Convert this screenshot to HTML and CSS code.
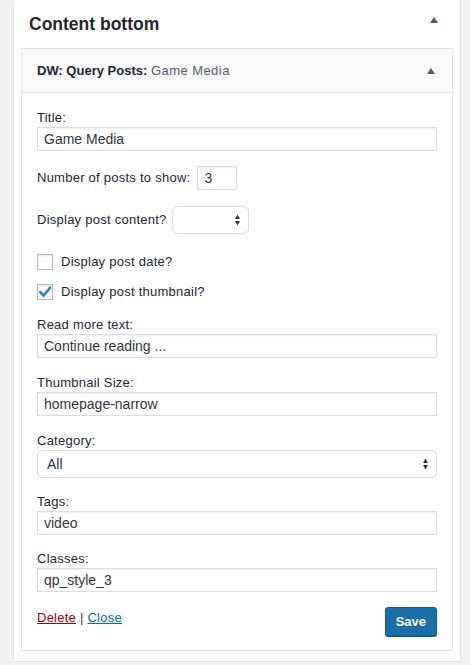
FILE: index.html
```html
<!DOCTYPE html>
<html lang="en">
<head>
<meta charset="utf-8">
<title>Content bottom</title>
<link rel="stylesheet" href="styles.css">
</head>
<body>
<div class="sidebar">
  <div class="sidebar-name">
    <h2>Content bottom</h2>
    <svg class="toggle toggle-outer" width="8" height="6" viewBox="0 0 8 6"><polygon points="0,6 4,0 8,6"/></svg>
  </div>
  <div class="widget">
    <div class="widget-top">
      <h3>DW: Query Posts: <span class="in-title">Game Media</span></h3>
      <svg class="toggle" width="8" height="6" viewBox="0 0 8 6"><polygon points="0,6 4,0 8,6"/></svg>
    </div>
    <form class="widget-inside">
      <div class="field f-title">
        <label class="lbl">Title:</label>
        <input class="text" type="text" value="Game Media">
      </div>
      <div class="row f-number">
        <label class="lbl-inline">Number of posts to show:</label>
        <input class="text num" type="text" value="3">
      </div>
      <div class="row f-content">
        <label class="lbl-inline">Display post content?</label>
        <div class="select small">
          <span class="select-value"></span>
          <svg class="arrows" width="5" height="12" viewBox="0 0 5 12"><polygon points="0,5 2.5,0.5 5,5"/><polygon points="0,7 5,7 2.5,11.5"/></svg>
        </div>
      </div>
      <div class="check f-date">
        <span class="box"></span>
        <span class="check-label">Display post date?</span>
      </div>
      <div class="check f-thumb">
        <span class="box"><svg width="14" height="14" viewBox="0 0 14 14"><path d="M2.3 7.2 L5.6 10.6 L12 2.8" fill="none" stroke="#1e8cbe" stroke-width="2.4" stroke-linecap="square"/></svg></span>
        <span class="check-label">Display post thumbnail?</span>
      </div>
      <div class="field f-more">
        <label class="lbl">Read more text:</label>
        <input class="text" type="text" value="Continue reading ...">
      </div>
      <div class="field f-size">
        <label class="lbl">Thumbnail Size:</label>
        <input class="text" type="text" value="homepage-narrow">
      </div>
      <div class="field f-cat">
        <label class="lbl">Category:</label>
        <div class="select wide">
          <span class="select-value">All</span>
          <svg class="arrows" width="5" height="12" viewBox="0 0 5 12"><polygon points="0,5 2.5,0.5 5,5"/><polygon points="0,7 5,7 2.5,11.5"/></svg>
        </div>
      </div>
      <div class="field f-tags">
        <label class="lbl">Tags:</label>
        <input class="text" type="text" value="video">
      </div>
      <div class="field f-classes">
        <label class="lbl">Classes:</label>
        <input class="text" type="text" value="qp_style_3">
      </div>
      <div class="footer">
        <div class="links"><a class="delete" href="#">Delete</a> <span class="sep">|</span> <a class="close" href="#">Close</a></div>
        <button class="save" type="button">Save</button>
      </div>
    </form>
  </div>
</div>
</body>
</html>
```
FILE: styles.css
```css
* { box-sizing: border-box; }

body {
  margin: 0;
  background: #f1f1f1;
  font-family: "Liberation Sans", Arial, Helvetica, sans-serif;
  font-size: 13px;
  letter-spacing: 0.25px;
  color: #23282d;
}

.sidebar {
  margin-left: 13px;
  width: 448px;
  background: #fff;
  border: 1px solid #e2e4e7;
  border-top: none;
  box-shadow: 0 1px 1px rgba(0,0,0,0.04);
  padding: 0 7px 10px;
}

.sidebar-name {
  height: 48px;
  display: flex;
  justify-content: space-between;
  align-items: flex-start;
  padding: 12px 15px 0 8px;
}

.sidebar-name h2 {
  margin: 0;
  font-size: 17.5px;
  line-height: 24px;
  font-weight: 700;
  letter-spacing: 0;
  color: #23282d;
}

.toggle polygon { fill: #555d66; }
.toggle-outer { margin-top: 5px; }

.widget {
  border: 1px solid #e5e5e5;
  background: #fff;
}

.widget-top {
  height: 44px;
  background: #f9f9f9;
  border-bottom: 1px solid #e5e5e5;
  display: flex;
  align-items: center;
  justify-content: space-between;
  padding: 0 17px 0 15px;
}

.widget-top h3 {
  margin: 0;
  font-size: 13px;
  line-height: 18px;
  font-weight: 700;
  letter-spacing: 0;
  color: #23282d;
}

.in-title {
  font-weight: 400;
  letter-spacing: 0.45px;
  color: #555d66;
}

.widget-inside {
  margin: 0;
  padding: 16px 15px 14px;
  display: flex;
  flex-direction: column;
}

.lbl {
  display: block;
  line-height: 18px;
}

.lbl-inline { line-height: 18px; }

.text {
  display: block;
  width: 100%;
  height: 24px;
  margin: 0;
  padding: 0 6px;
  border: 1px solid #ddd;
  border-radius: 0;
  box-shadow: inset 0 1px 2px rgba(0,0,0,0.07);
  background: #fff;
  font-family: inherit;
  font-size: 14px;
  letter-spacing: 0;
  color: #32373c;
  outline: none;
}

.row {
  display: flex;
  align-items: center;
}

.f-number { margin-top: 15px; gap: 7px; }
.text.num { width: 40px; padding: 0 6px; }

.f-content { margin-top: 16px; gap: 5px; }

.select {
  position: relative;
  height: 28px;
  border: 1px solid #ddd;
  border-radius: 5px;
  background: #fff;
  display: flex;
  align-items: center;
  font-size: 14px;
  letter-spacing: 0;
  color: #32373c;
  padding: 0 9px;
}
.select.small { width: 77px; }
.select.wide { width: 100%; }

.arrows {
  position: absolute;
  right: 8px;
  top: 7px;
}
.arrows polygon { fill: #333; }

.check {
  display: flex;
  align-items: center;
  height: 16px;
  gap: 8px;
}
.f-date { margin-top: 20px; }
.f-thumb { margin-top: 14px; }

.box {
  width: 16px;
  height: 16px;
  border: 1px solid #b4b9be;
  background: #fff;
  box-shadow: inset 0 1px 2px rgba(0,0,0,0.1);
  display: flex;
  align-items: center;
  justify-content: center;
}

.check-label { line-height: 18px; }

.f-more { margin-top: 16px; }
.f-size { margin-top: 16px; }
.f-cat { margin-top: 16px; }
.f-tags { margin-top: 15px; }
.f-classes { margin-top: 15px; }

.footer {
  margin-top: 15px;
  display: flex;
  justify-content: space-between;
  align-items: flex-start;
}

.links {
  line-height: 18px;
  padding-top: 2px;
  color: #444;
}

.delete { color: #a00; }
.close { color: #0073aa; }

.save {
  height: 29px;
  padding: 0 10px;
  border: 1px solid #0a5f93;
  border-radius: 3px;
  background: #1a6fa9;
  box-shadow: 0 1px 0 #0a5f93;
  color: #fff;
  font-family: inherit;
  font-size: 13px;
  font-weight: 700;
  letter-spacing: 0;
  line-height: 27px;
}
```
